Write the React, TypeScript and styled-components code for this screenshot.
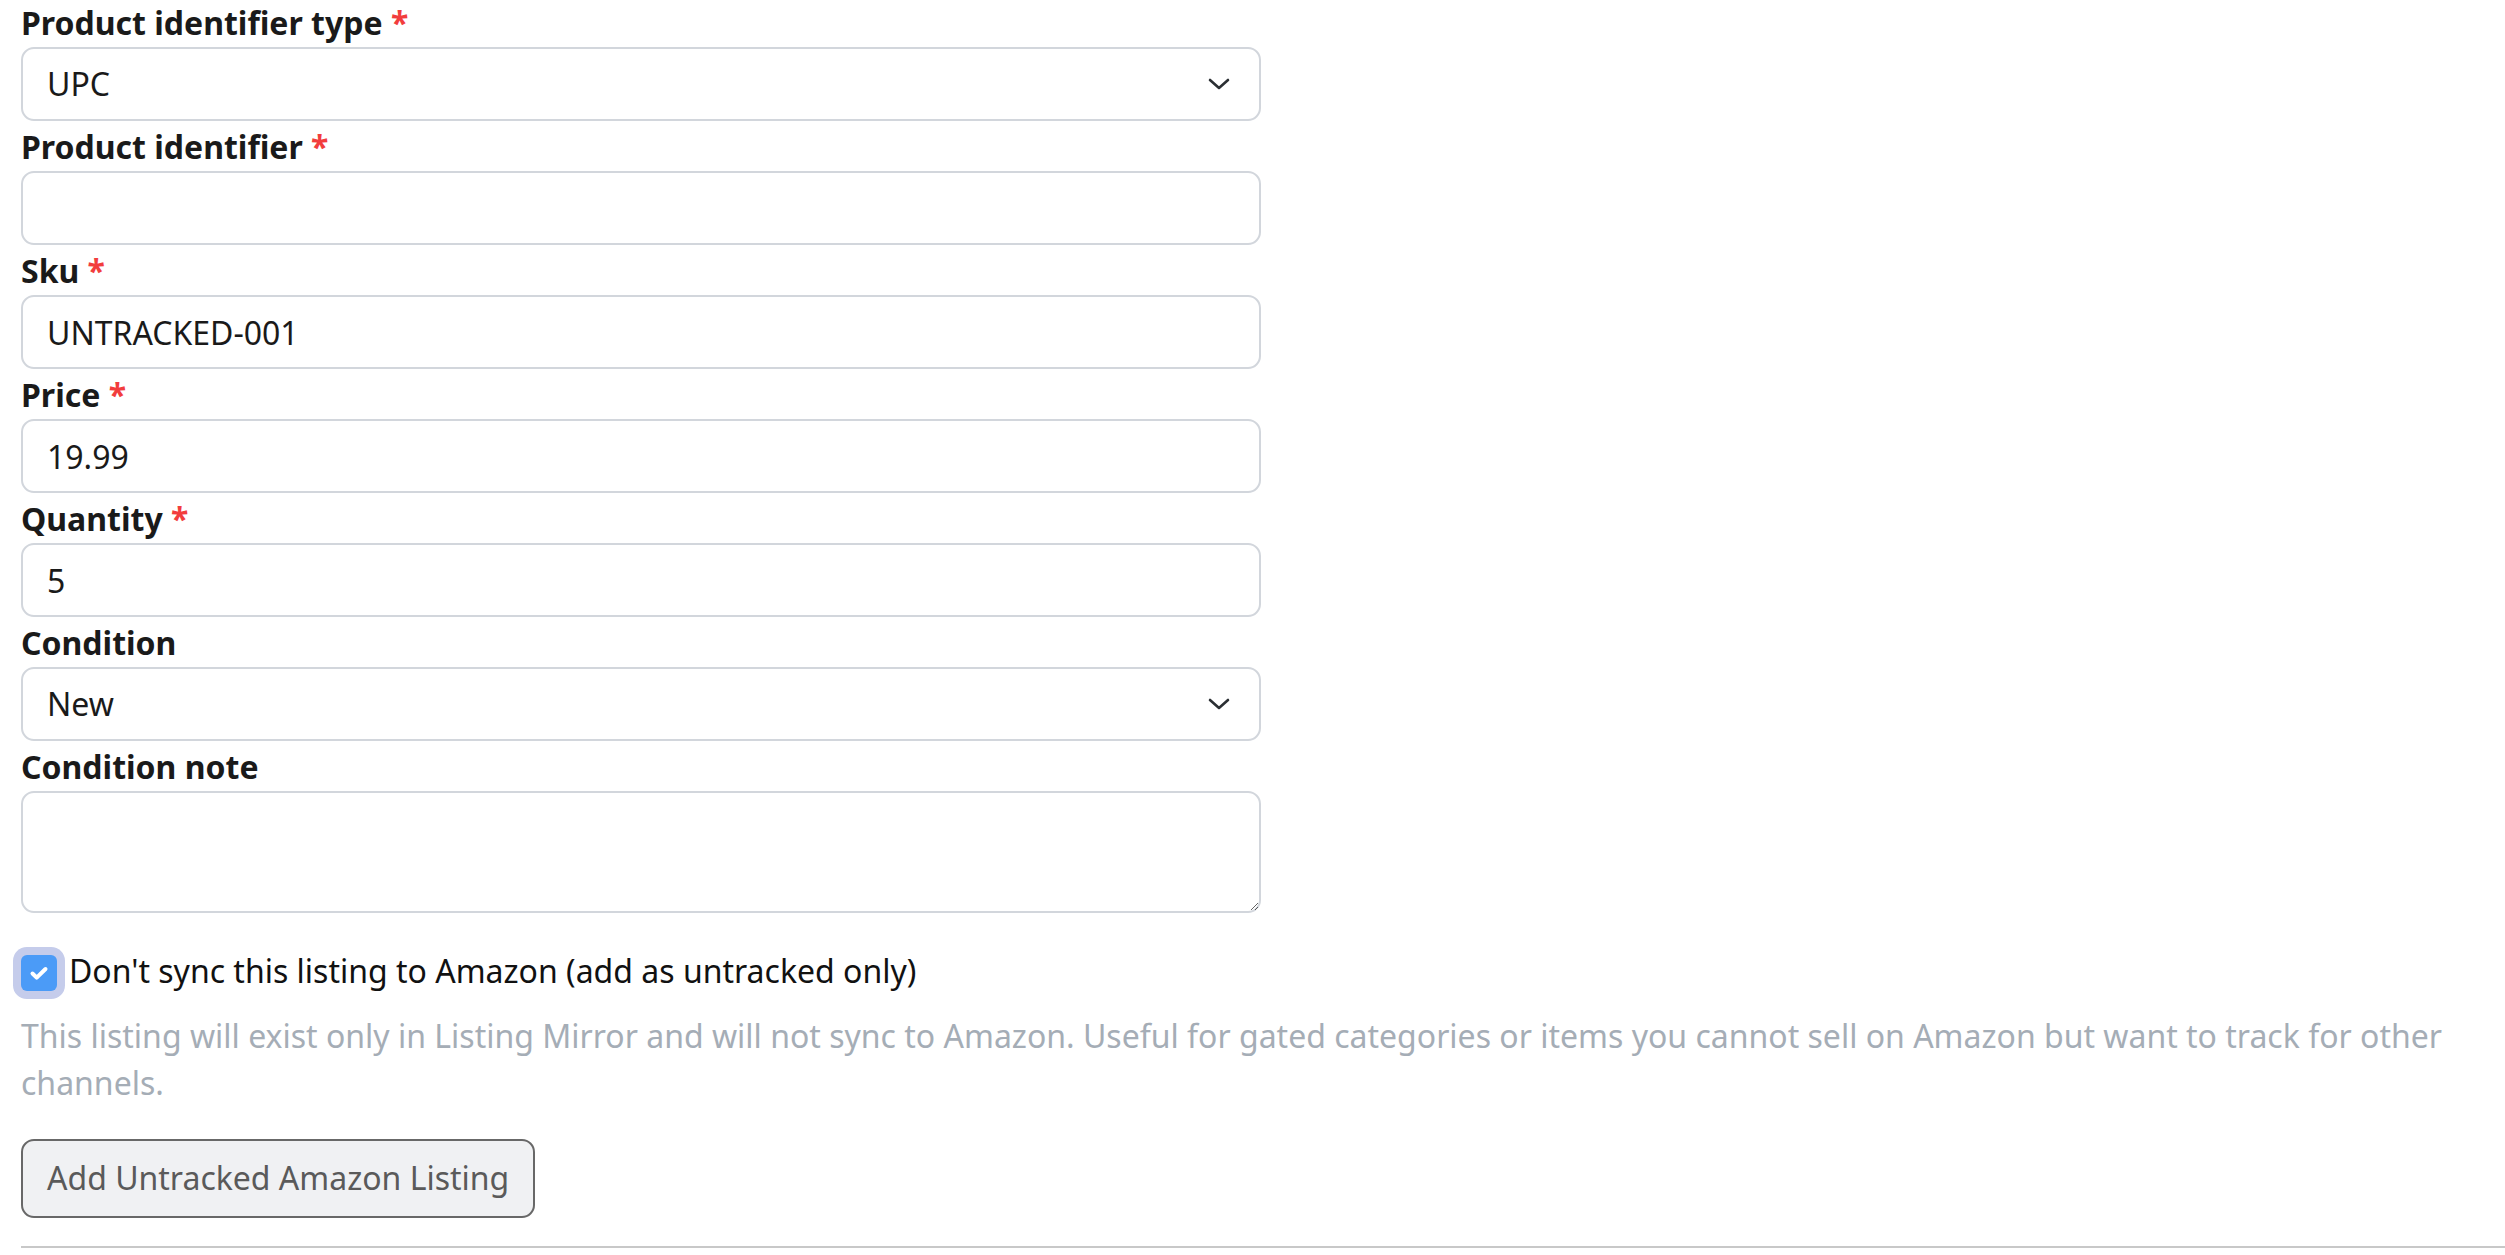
import React from 'react';
import styled, { createGlobalStyle } from 'styled-components';

const GlobalStyle = createGlobalStyle`
  html, body {
    margin: 0;
    padding: 0;
    background: #ffffff;
  }
  body {
    font-family: 'Noto Sans', 'Open Sans', sans-serif;
    color: #1a1a1a;
  }
  * {
    box-sizing: border-box;
  }
`;

type FieldProps = {
  label: string;
  required?: boolean;
  children: React.ReactNode;
};

function Field({ label, required, children }: FieldProps) {
  return (
    <FieldRoot>
      <Label>
        {label}
        {required && <Asterisk> *</Asterisk>}
      </Label>
      {children}
    </FieldRoot>
  );
}

function Chevron() {
  return (
    <ChevronIcon viewBox="0 0 24 24" width="24" height="24" fill="none">
      <path d="M3 8l9 8 9-8" stroke="#2b2f33" strokeWidth="2.6" strokeLinecap="round" strokeLinejoin="round" />
    </ChevronIcon>
  );
}

function SelectBox({ value, options }: { value: string; options: string[] }) {
  return (
    <SelectWrap>
      <Select defaultValue={value}>
        {options.map((o) => (
          <option key={o} value={o}>
            {o}
          </option>
        ))}
      </Select>
      <Chevron />
    </SelectWrap>
  );
}

export default function App() {
  return (
    <>
      <GlobalStyle />
      <Page>
        <Form>
          <Field label="Product identifier type" required>
            <SelectBox value="UPC" options={['UPC', 'EAN', 'ASIN', 'ISBN']} />
          </Field>
          <Field label="Product identifier" required>
            <TextInput type="text" defaultValue="" />
          </Field>
          <Field label="Sku" required>
            <TextInput type="text" defaultValue="UNTRACKED-001" />
          </Field>
          <Field label="Price" required>
            <TextInput type="text" defaultValue="19.99" />
          </Field>
          <Field label="Quantity" required>
            <TextInput type="text" defaultValue="5" />
          </Field>
          <Field label="Condition">
            <SelectBox value="New" options={['New', 'Used - Like New', 'Used - Good', 'Refurbished']} />
          </Field>
          <Field label="Condition note">
            <TextArea />
          </Field>
        </Form>

        <CheckRow>
          <CheckBox>
            <svg viewBox="0 0 24 24" width="24" height="24" fill="none">
              <path d="M5.5 12.5l4.2 4.2L18.5 8" stroke="#ffffff" strokeWidth="4" strokeLinecap="round" strokeLinejoin="round" />
            </svg>
          </CheckBox>
          <CheckLabel>Don't sync this listing to Amazon (add as untracked only)</CheckLabel>
        </CheckRow>

        <HelpText>
          This listing will exist only in Listing Mirror and will not sync to Amazon. Useful for gated categories or
          items you cannot sell on Amazon but want to track for other channels.
        </HelpText>

        <SubmitButton type="button">Add Untracked Amazon Listing</SubmitButton>

        <Divider />
      </Page>
    </>
  );
}

const Page = styled.div`
  padding: 3px 0 0 21px;
  font-size: 32px;
  line-height: 48px;
`;

const Form = styled.div`
  display: flex;
  flex-direction: column;
  gap: 6px;
  width: 1240px;
`;

const FieldRoot = styled.div`
  display: flex;
  flex-direction: column;
`;

const Label = styled.label`
  display: block;
  font-weight: 700;
  font-size: 32px;
  line-height: 40px;
  color: #1a1a1a;
  margin-bottom: 4px;
`;

const Asterisk = styled.span`
  color: #f23d3d;
`;

const inputBase = `
  width: 100%;
  border: 2px solid #d2d6dc;
  border-radius: 13px;
  background: #ffffff;
  font-family: 'Noto Sans', 'Open Sans', sans-serif;
  font-size: 32px;
  line-height: 48px;
  color: #1a1a1a;
  padding: 11px 24px;
  outline: none;
  margin: 0;
`;

const TextInput = styled.input`
  ${inputBase}
  display: block;
  height: 74px;
`;

const SelectWrap = styled.div`
  position: relative;
`;

const Select = styled.select`
  ${inputBase}
  display: block;
  height: 74px;
  appearance: none;
  -webkit-appearance: none;
  padding-right: 70px;
`;

const ChevronIcon = styled.svg`
  position: absolute;
  right: 30px;
  top: 50%;
  transform: translateY(-50%);
  pointer-events: none;
`;

const TextArea = styled.textarea`
  ${inputBase}
  display: block;
  height: 122px;
  resize: vertical;
`;

const CheckRow = styled.label`
  display: flex;
  align-items: center;
  gap: 12px;
  margin-top: 34px;
  height: 48px;
`;

const CheckBox = styled.span`
  flex: none;
  display: flex;
  align-items: center;
  justify-content: center;
  width: 36px;
  height: 36px;
  margin-top: 4px;
  border-radius: 6px;
  background: #4b9bf7;
  box-shadow: 0 0 0 8px #c5cceb;
`;

const CheckLabel = styled.span`
  font-size: 32px;
  line-height: 48px;
  color: #111111;
`;

const HelpText = styled.p`
  margin: 17px 0 0;
  font-size: 32px;
  line-height: 47px;
  color: #a5adb6;
`;

const SubmitButton = styled.button`
  display: block;
  margin-top: 33px;
  height: 79px;
  padding: 0 24px 2px;
  border: 2px solid #686868;
  border-radius: 13px;
  background: #f0f1f3;
  color: #5a5a5a;
  font-family: 'Noto Sans', 'Open Sans', sans-serif;
  font-size: 32px;
  line-height: 48px;
  cursor: pointer;
`;

const Divider = styled.hr`
  margin: 28px 0 0;
  border: none;
  border-top: 2px solid #c8c8c8;
`;
